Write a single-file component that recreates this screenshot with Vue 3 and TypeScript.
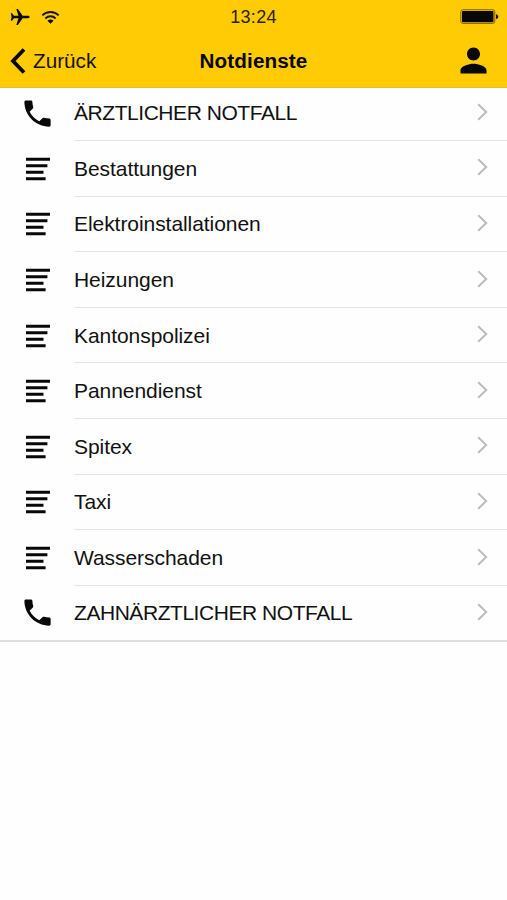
<script setup lang="ts">
interface Entry {
  label: string
  icon: 'phone' | 'list'
}

const entries: Entry[] = [
  { label: 'ÄRZTLICHER NOTFALL', icon: 'phone' },
  { label: 'Bestattungen', icon: 'list' },
  { label: 'Elektroinstallationen', icon: 'list' },
  { label: 'Heizungen', icon: 'list' },
  { label: 'Kantonspolizei', icon: 'list' },
  { label: 'Pannendienst', icon: 'list' },
  { label: 'Spitex', icon: 'list' },
  { label: 'Taxi', icon: 'list' },
  { label: 'Wasserschaden', icon: 'list' },
  { label: 'ZAHNÄRZTLICHER NOTFALL', icon: 'phone' },
]
</script>

<template>
  <div class="screen">
    <header class="header">
      <div class="status">
        <div class="signals">
          <svg class="plane" viewBox="0 0 20 18">
            <path d="M19.6 9c0-.8-.8-1.2-1.8-1.2h-5.2L7.9 1H6.3l2.2 6.8H4L2 5.2H.8L1.6 9l-.8 3.8H2l2-2.6h4.5L6.3 17h1.6l4.7-6.8h5.2c1 0 1.8-.4 1.8-1.2z" />
          </svg>
          <svg class="wifi" viewBox="0 0 20 15">
            <path d="M1.4 5.2C6.3.5 13.7.5 18.6 5.2M4.6 8.5c3.1-3 7.7-3 10.8 0" fill="none" stroke="#171300" stroke-width="2" />
            <path d="M10 14.2 6.8 11c1.8-1.7 4.6-1.7 6.4 0z" />
          </svg>
        </div>
        <time class="clock">13:24</time>
        <svg class="battery" viewBox="0 0 39 16">
          <rect x=".8" y=".8" width="34" height="13.6" rx="2" fill="none" stroke="#7a6100" stroke-width="1" />
          <rect x="2" y="2" width="31.5" height="11.2" rx=".8" />
          <path d="M36 5.2c3 .5 3 4.3 0 4.8z" />
        </svg>
      </div>
      <nav class="nav">
        <button class="back" type="button">
          <svg class="back-icon" viewBox="0 0 16 26">
            <path d="M14 1.5 3 13l11 11.5" fill="none" stroke="#080700" stroke-width="3.8" />
          </svg>
          <span>Zurück</span>
        </button>
        <h1 class="title">Notdienste</h1>
        <svg class="person" viewBox="0 0 24 24">
          <path d="M12 12c2.21 0 4-1.79 4-4s-1.79-4-4-4-4 1.79-4 4 1.79 4 4 4zm0 2c-2.67 0-8 1.34-8 4v2h16v-2c0-2.66-5.33-4-8-4z" />
        </svg>
      </nav>
    </header>
    <ul class="list">
      <li v-for="entry in entries" :key="entry.label" class="row">
        <svg v-if="entry.icon === 'phone'" class="phone" viewBox="0 0 24 24">
          <path d="M6.62 10.79c1.44 2.83 3.76 5.14 6.59 6.59l2.2-2.2c.27-.27.67-.36 1.02-.24 1.12.37 2.33.57 3.57.57.55 0 1 .45 1 1V20c0 .55-.45 1-1 1-9.39 0-17-7.61-17-17 0-.55.45-1 1-1h3.5c.55 0 1 .45 1 1 0 1.25.2 2.45.57 3.57.11.35.03.74-.25 1.02l-2.2 2.2z" />
        </svg>
        <svg v-else class="lines" viewBox="0 0 24 24">
          <path d="M0 .7h24v3H0zM0 7.2h21.4v3H0zM0 13.7h17.5v3H0zM0 20.2h19.6v3H0z" />
        </svg>
        <div class="body">
          <span class="label" :class="{ caps: entry.icon === 'phone' }">{{ entry.label }}</span>
          <svg class="chevron" viewBox="0 0 11 18">
            <path d="m1.2 1.2 8 7.8-8 7.8" fill="none" stroke="#bcbcbf" stroke-width="2" />
          </svg>
        </div>
      </li>
    </ul>
  </div>
</template>

<style>
body {
  background: #fefefe;
}
</style>

<style scoped>
.screen {
  height: 900px;
  overflow: hidden;
  font-family: "Liberation Sans", Arial, sans-serif;
  color: #111;
}
svg {
  display: block;
  flex: none;
  fill: #080808;
}
.header {
  box-sizing: border-box;
  height: 87.5px;
  background: #ffcb05;
  border-bottom: 1px solid #e5bd2c;
}
.status {
  display: grid;
  grid-template-columns: 1fr auto 1fr;
  align-items: center;
  height: 34px;
  padding: 0 8px 0 10px;
}
.signals {
  display: flex;
  align-items: center;
  gap: 11px;
}
.plane {
  width: 20px;
  height: 18px;
}
.wifi {
  width: 19px;
  height: 15px;
}
.clock {
  padding-right: 2px;
  font-size: 18px;
  letter-spacing: 0.3px;
  color: #292100;
}
.battery {
  width: 39px;
  height: 16px;
  justify-self: end;
}
.nav {
  display: grid;
  grid-template-columns: 1fr auto 1fr;
  align-items: center;
  height: 53px;
  padding: 0 14px 0 10px;
}
.back {
  display: flex;
  align-items: center;
  gap: 7px;
  padding: 0;
  border: 0;
  background: none;
  font: inherit;
  font-size: 20.7px;
  color: #171300;
}
.back-icon {
  width: 16px;
  height: 26px;
}
.title {
  margin: 0;
  padding-left: 4px;
  font-size: 20.7px;
  font-weight: 700;
  letter-spacing: 0.1px;
  color: #080700;
}
.person {
  width: 39px;
  height: 39px;
  justify-self: end;
}
.list {
  margin: -2px 0 0;
  padding: 0;
  list-style: none;
  border-bottom: 2px solid #dedede;
}
.row {
  display: flex;
  align-items: center;
  height: 55.6px;
}
.row:last-child {
  height: 53.8px;
}
.phone {
  width: 35px;
  height: 35px;
  margin: 0 19px 0 20px;
}
.lines {
  width: 24px;
  height: 24px;
  margin: 0 24px 0 26px;
}
.body {
  box-sizing: border-box;
  display: flex;
  flex: 1;
  align-items: center;
  justify-content: space-between;
  height: 100%;
  padding-right: 19px;
  border-bottom: 1px solid #e4e4e4;
}
.row:last-child .body {
  border-bottom: 0;
}
.label {
  padding-top: 1px;
  font-size: 21px;
  letter-spacing: -0.06px;
  white-space: nowrap;
}
.caps {
  letter-spacing: -0.45px;
}
.chevron {
  width: 11px;
  height: 18px;
  margin-bottom: 2px;
}
</style>
